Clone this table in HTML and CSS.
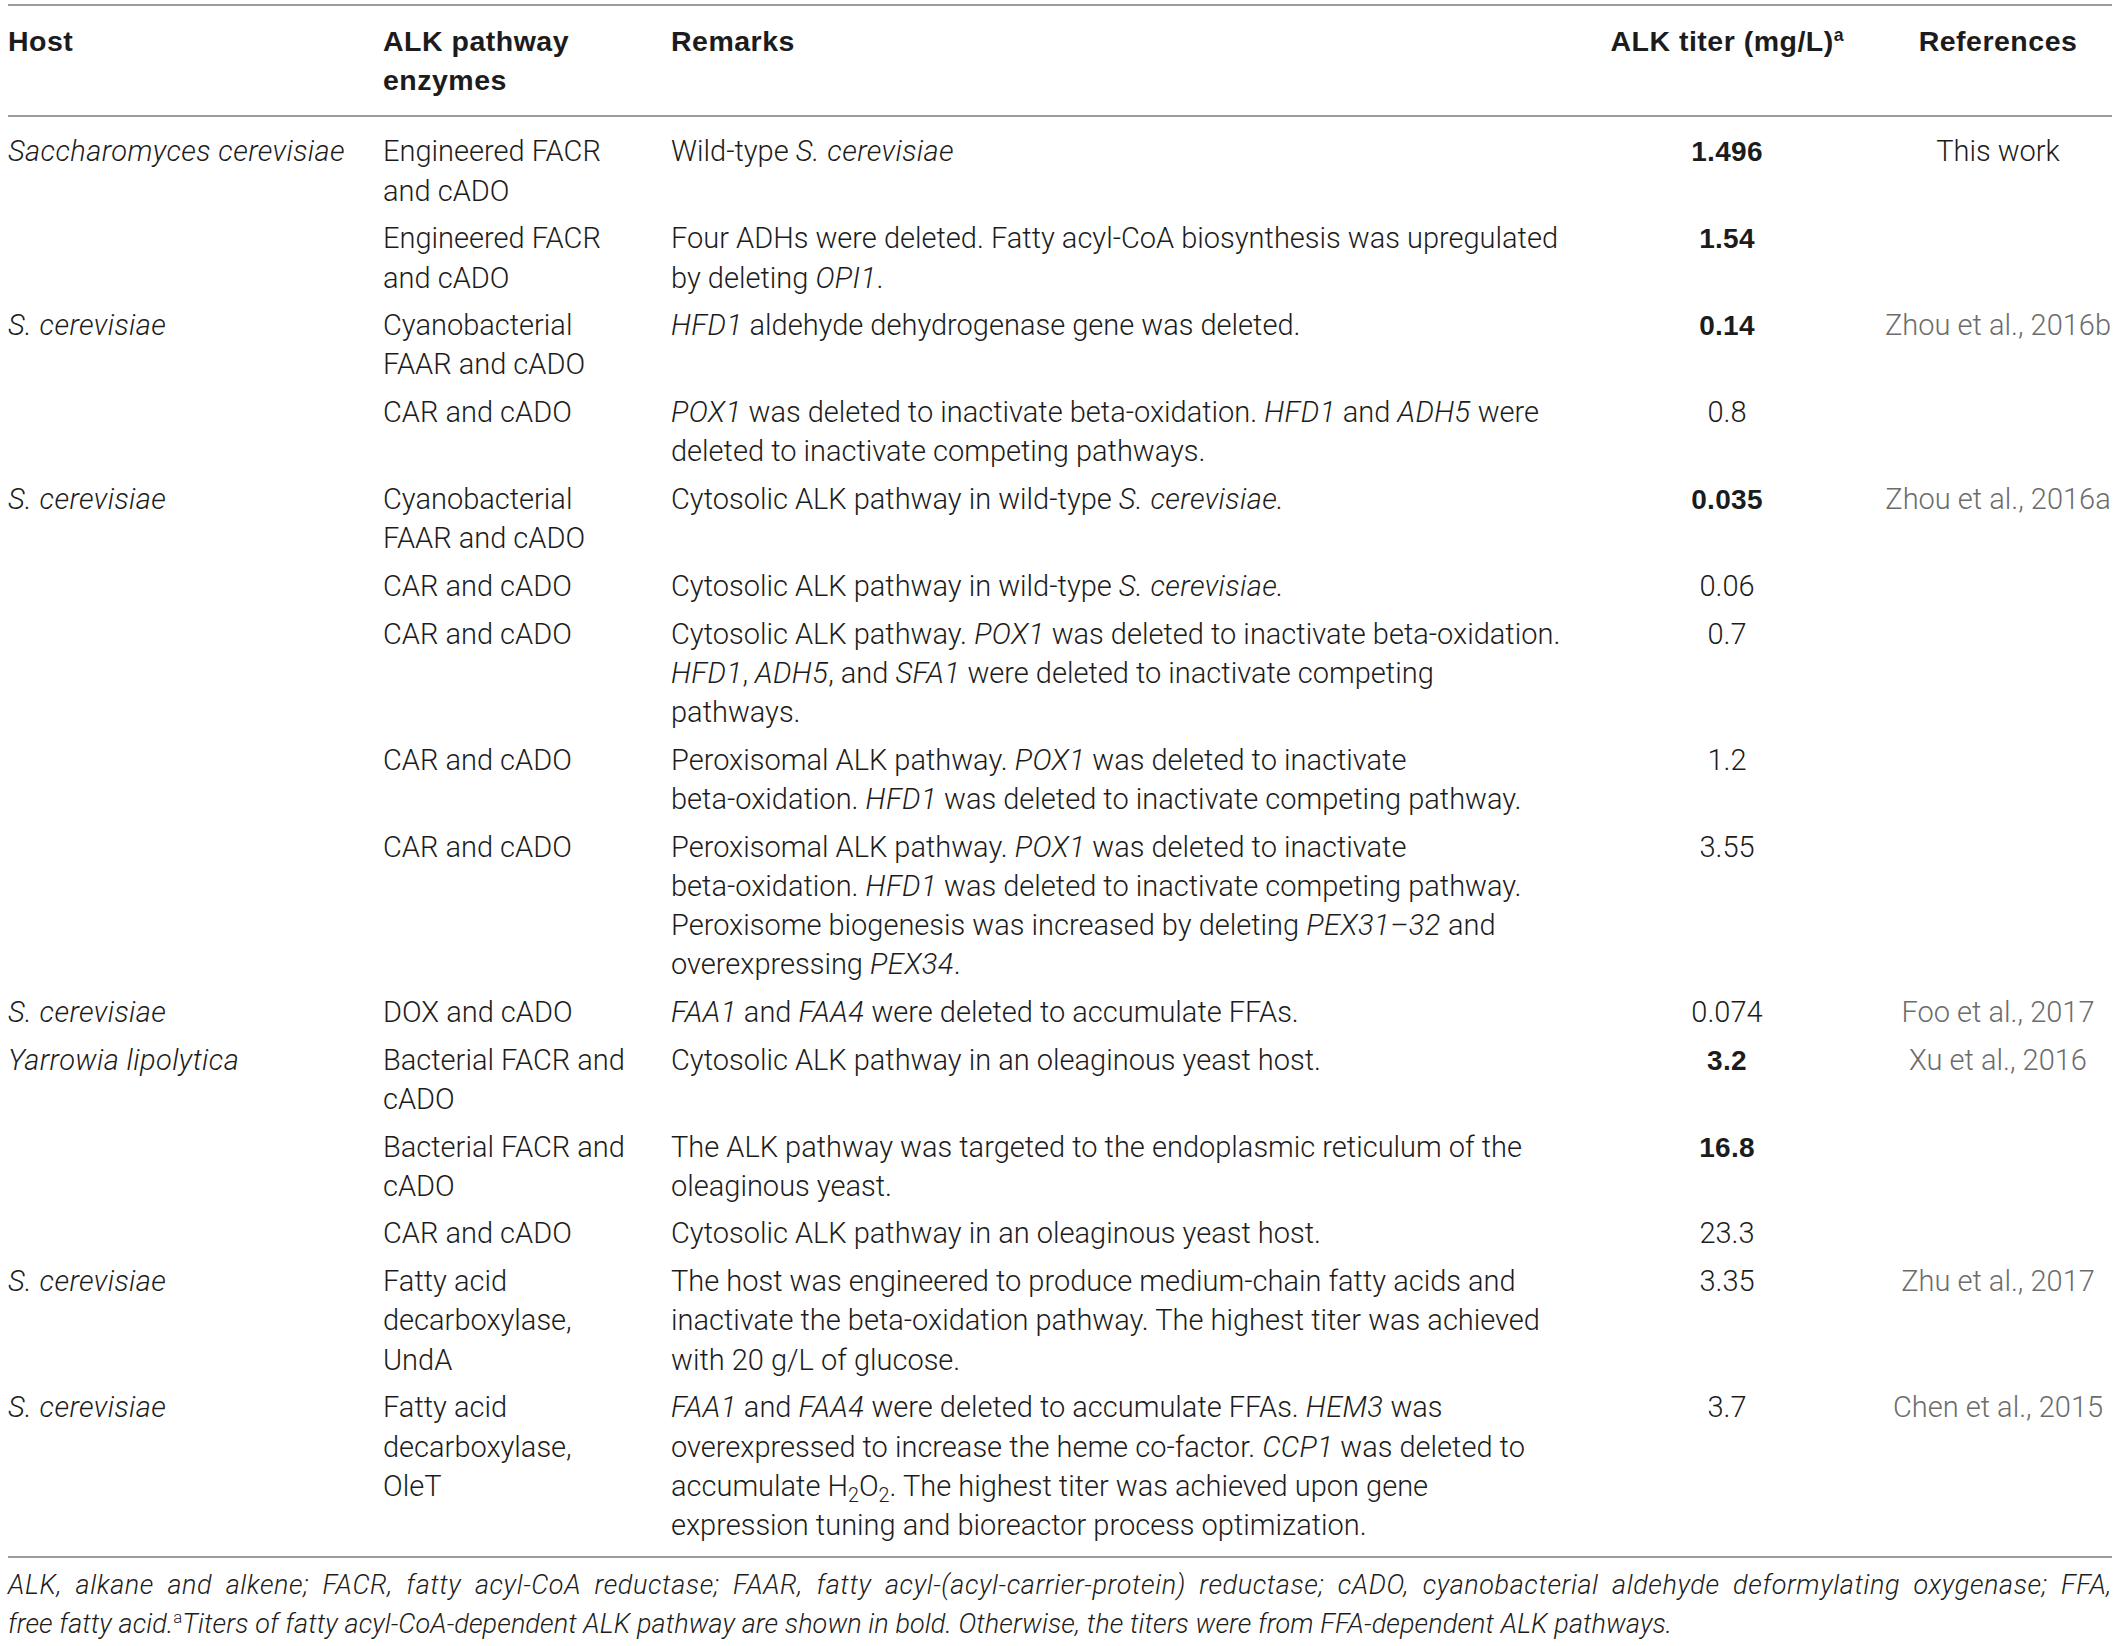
FILE: index.html
```html
<!DOCTYPE html>
<html lang="en">
<head>
<meta charset="utf-8">
<title>ALK production in yeast</title>
<link rel="stylesheet" href="styles.css">
</head>
<body>
<div class="page">
  <table class="tbl">
    <colgroup>
      <col class="w-host">
      <col class="w-enz">
      <col class="w-rem">
      <col class="w-num">
      <col class="w-ref">
    </colgroup>
    <thead>
      <tr>
        <th>Host</th>
        <th>ALK pathway<br>enzymes</th>
        <th>Remarks</th>
        <th class="num">ALK titer (mg/L)<sup>a</sup></th>
        <th class="num">References</th>
      </tr>
    </thead>
    <tbody>
      <tr>
        <td><i>Saccharomyces cerevisiae</i></td>
        <td>Engineered FACR<br>and cADO</td>
        <td>Wild-type <i>S. cerevisiae</i></td>
        <td class="num"><b>1.496</b></td>
        <td class="ref own">This work</td>
      </tr>
      <tr>
        <td></td>
        <td>Engineered FACR<br>and cADO</td>
        <td>Four ADHs were deleted. Fatty acyl-CoA biosynthesis was upregulated<br>by deleting <i>OPI1</i>.</td>
        <td class="num"><b>1.54</b></td>
        <td class="ref"></td>
      </tr>
      <tr>
        <td><i>S. cerevisiae</i></td>
        <td>Cyanobacterial<br>FAAR and cADO</td>
        <td><i>HFD1</i> aldehyde dehydrogenase gene was deleted.</td>
        <td class="num"><b>0.14</b></td>
        <td class="ref">Zhou et al., 2016b</td>
      </tr>
      <tr>
        <td></td>
        <td>CAR and cADO</td>
        <td><i>POX1</i> was deleted to inactivate beta-oxidation. <i>HFD1</i> and <i>ADH5</i> were<br>deleted to inactivate competing pathways.</td>
        <td class="num">0.8</td>
        <td class="ref"></td>
      </tr>
      <tr>
        <td><i>S. cerevisiae</i></td>
        <td>Cyanobacterial<br>FAAR and cADO</td>
        <td>Cytosolic ALK pathway in wild-type <i>S. cerevisiae.</i></td>
        <td class="num"><b>0.035</b></td>
        <td class="ref">Zhou et al., 2016a</td>
      </tr>
      <tr>
        <td></td>
        <td>CAR and cADO</td>
        <td>Cytosolic ALK pathway in wild-type <i>S. cerevisiae.</i></td>
        <td class="num">0.06</td>
        <td class="ref"></td>
      </tr>
      <tr>
        <td></td>
        <td>CAR and cADO</td>
        <td>Cytosolic ALK pathway. <i>POX1</i> was deleted to inactivate beta-oxidation.<br><i>HFD1</i>, <i>ADH5</i>, and <i>SFA1</i> were deleted to inactivate competing<br>pathways.</td>
        <td class="num">0.7</td>
        <td class="ref"></td>
      </tr>
      <tr>
        <td></td>
        <td>CAR and cADO</td>
        <td>Peroxisomal ALK pathway. <i>POX1</i> was deleted to inactivate<br>beta-oxidation. <i>HFD1</i> was deleted to inactivate competing pathway.</td>
        <td class="num">1.2</td>
        <td class="ref"></td>
      </tr>
      <tr>
        <td></td>
        <td>CAR and cADO</td>
        <td>Peroxisomal ALK pathway. <i>POX1</i> was deleted to inactivate<br>beta-oxidation. <i>HFD1</i> was deleted to inactivate competing pathway.<br>Peroxisome biogenesis was increased by deleting <i>PEX31–32</i> and<br>overexpressing <i>PEX34</i>.</td>
        <td class="num">3.55</td>
        <td class="ref"></td>
      </tr>
      <tr>
        <td><i>S. cerevisiae</i></td>
        <td>DOX and cADO</td>
        <td><i>FAA1</i> and <i>FAA4</i> were deleted to accumulate FFAs.</td>
        <td class="num">0.074</td>
        <td class="ref">Foo et al., 2017</td>
      </tr>
      <tr>
        <td><i>Yarrowia lipolytica</i></td>
        <td>Bacterial FACR and<br>cADO</td>
        <td>Cytosolic ALK pathway in an oleaginous yeast host.</td>
        <td class="num"><b>3.2</b></td>
        <td class="ref">Xu et al., 2016</td>
      </tr>
      <tr>
        <td></td>
        <td>Bacterial FACR and<br>cADO</td>
        <td>The ALK pathway was targeted to the endoplasmic reticulum of the<br>oleaginous yeast.</td>
        <td class="num"><b>16.8</b></td>
        <td class="ref"></td>
      </tr>
      <tr>
        <td></td>
        <td>CAR and cADO</td>
        <td>Cytosolic ALK pathway in an oleaginous yeast host.</td>
        <td class="num">23.3</td>
        <td class="ref"></td>
      </tr>
      <tr>
        <td><i>S. cerevisiae</i></td>
        <td>Fatty acid<br>decarboxylase,<br>UndA</td>
        <td>The host was engineered to produce medium-chain fatty acids and<br>inactivate the beta-oxidation pathway. The highest titer was achieved<br>with 20 g/L of glucose.</td>
        <td class="num">3.35</td>
        <td class="ref">Zhu et al., 2017</td>
      </tr>
      <tr>
        <td><i>S. cerevisiae</i></td>
        <td>Fatty acid<br>decarboxylase,<br>OleT</td>
        <td><i>FAA1</i> and <i>FAA4</i> were deleted to accumulate FFAs. <i>HEM3</i> was<br>overexpressed to increase the heme co-factor. <i>CCP1</i> was deleted to<br>accumulate H<sub>2</sub>O<sub>2</sub>. The highest titer was achieved upon gene<br>expression tuning and bioreactor process optimization.</td>
        <td class="num">3.7</td>
        <td class="ref">Chen et al., 2015</td>
      </tr>
    </tbody>
  </table>
  <div class="note">
    <span class="note-first">ALK, alkane and alkene; FACR, fatty acyl-CoA reductase; FAAR, fatty acyl-(acyl-carrier-protein) reductase; cADO, cyanobacterial aldehyde deformylating oxygenase; FFA,</span>
    <span class="note-last">free fatty acid.<sup>a</sup>Titers of fatty acyl-CoA-dependent ALK pathway are shown in bold. Otherwise, the titers were from FFA-dependent ALK pathways.</span>
  </div>
</div>
</body>
</html>
```

FILE: styles.css
```css
html, body {
  margin: 0;
  padding: 0;
  background: #ffffff;
}

body {
  color: #1c1c1c;
  font-family: Roboto, "Liberation Sans", Arial, sans-serif;
  font-weight: 300;
}

.page {
  padding: 4px 8px 0 8px;
}

.tbl {
  width: 2104px;
  table-layout: fixed;
  border-collapse: collapse;
  font-size: 29px;
  line-height: 39.2px;
}

.w-host { width: 375px; }
.w-enz { width: 288px; }
.w-rem { width: 899px; }
.w-num { width: 314px; }
.w-ref { width: 228px; }

.tbl th {
  font-family: "Liberation Sans", Arial, sans-serif;
  font-size: 28.5px;
  font-weight: bold;
  letter-spacing: 0.5px;
  text-align: left;
  vertical-align: top;
  padding: 16px 0 15px 0;
  border-top: 2px solid #9c9c9c;
  border-bottom: 2px solid #9c9c9c;
  white-space: nowrap;
}

.tbl td {
  vertical-align: top;
  padding: 4px 0 4.5px 0;
  white-space: nowrap;
}

.tbl i {
  letter-spacing: 0.4px;
}

.tbl b {
  font-family: "Liberation Sans", Arial, sans-serif;
  font-size: 28px;
  font-weight: bold;
  letter-spacing: 0.3px;
}

.tbl tbody tr:first-child td {
  padding-top: 15px;
}

.tbl tbody tr:last-child td {
  padding-bottom: 11px;
  border-bottom: 2px solid #9c9c9c;
}

.tbl .num {
  text-align: center;
}

.tbl .ref {
  text-align: center;
  color: #6c6c6c;
}

.tbl .ref.own {
  color: #1c1c1c;
}

.tbl sup {
  font-size: 0.62em;
  line-height: 0;
  vertical-align: 0.55em;
  font-weight: bold;
  letter-spacing: 0;
}

.tbl sub {
  font-size: 0.68em;
  line-height: 0;
  vertical-align: -0.28em;
}

.note {
  font-size: 27px;
  line-height: 38.5px;
  font-style: italic;
  letter-spacing: 0.1px;
  padding-top: 8px;
}

.note-first {
  display: block;
  text-align: justify;
  text-align-last: justify;
  letter-spacing: 0.6px;
  white-space: normal;
}

.note-last {
  display: block;
  white-space: nowrap;
}

.note sup {
  font-size: 0.62em;
  line-height: 0;
  vertical-align: 0.6em;
  font-style: normal;
}
```
